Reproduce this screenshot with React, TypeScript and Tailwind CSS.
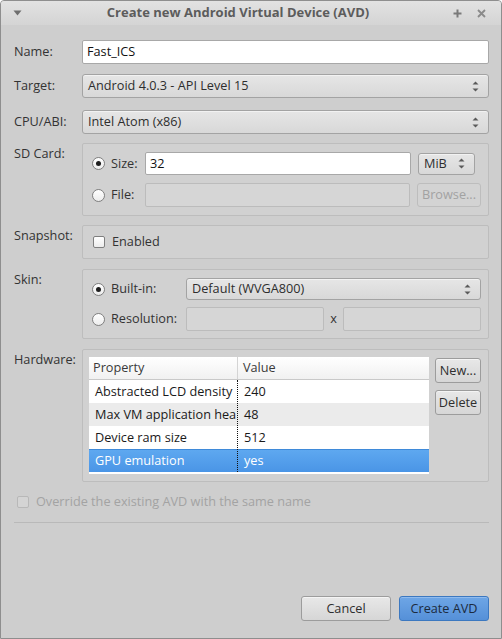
import React from "react";

const font = { fontFamily: "'Open Sans', 'DejaVu Sans', sans-serif" };

function Arrows() {
  return (
    <svg width="7" height="11" viewBox="0 0 7 11" className="shrink-0">
      <path d="M3.5 0.5 L6.5 3.5 L0.5 3.5 Z" fill="#5a5a5a" />
      <path d="M3.5 10.5 L6.5 7.5 L0.5 7.5 Z" fill="#5a5a5a" />
    </svg>
  );
}

function Combo({ text, className = "" }: { text: string; className?: string }) {
  return (
    <div
      className={
        "flex items-center justify-between pl-[5px] pr-[9px] rounded-[3px] border border-[#a3a3a3] bg-gradient-to-b from-[#e6e6e6] to-[#d8d8d8] text-[#2e2e2e] shadow-[inset_0_1px_0_#f2f2f2] " +
        className
      }
    >
      <span>{text}</span>
      <Arrows />
    </div>
  );
}

function Radio({ checked }: { checked?: boolean }) {
  return (
    <div className="w-[13px] h-[13px] rounded-full border border-[#7f7f7f] bg-gradient-to-b from-[#ffffff] to-[#ececec] flex items-center justify-center shrink-0">
      {checked && <div className="w-[5px] h-[5px] rounded-full bg-[#1e1e1e]" />}
    </div>
  );
}

function Group({ className = "", children }: { className?: string; children: React.ReactNode }) {
  return (
    <div className={"flex-1 border border-[#bdbdbd] rounded-[2px] bg-[#d1d1d1] " + className}>
      {children}
    </div>
  );
}

function Btn({ text, className = "" }: { text: string; className?: string }) {
  return (
    <div
      className={
        "flex items-center justify-center rounded-[3px] border border-[#9c9c9c] bg-gradient-to-b from-[#e8e8e8] to-[#d6d6d6] text-[#2e2e2e] shadow-[inset_0_1px_0_#f4f4f4] " +
        className
      }
    >
      {text}
    </div>
  );
}

export default function App() {
  const rows = [
    { p: "Abstracted LCD density", v: "240", bg: "bg-white" },
    { p: "Max VM application hea", v: "48", bg: "bg-[#ebebeb]" },
    { p: "Device ram size", v: "512", bg: "bg-white" },
  ];
  return (
    <div
      style={font}
      className="w-[502px] h-[639px] bg-[#cecece] border border-[#8e8e8e] rounded-t-[4px] flex flex-col overflow-hidden text-[12.7px] text-[#333333]"
    >
      {/* Title bar */}
      <div className="h-[24px] shrink-0 flex items-center bg-gradient-to-b from-[#e2e2e2] to-[#d4d4d4] relative">
        <div className="w-[38px] pl-[12px] flex items-center">
          <svg width="9" height="6" viewBox="0 0 9 6">
            <path d="M0.5 0.5 L8.5 0.5 L4.5 5.5 Z" fill="#6e6e6e" />
          </svg>
        </div>
        <div className="flex-1 text-center font-bold text-[13px] text-[#5c5c5c] pr-[12px]">
          Create new Android Virtual Device (AVD)
        </div>
        <div className="w-[52px] flex items-center gap-[15px] pl-[4px]">
          <svg width="9" height="9" viewBox="0 0 9 9">
            <path d="M4.5 0.5 V8.5 M0.5 4.5 H8.5" stroke="#7a7a7a" strokeWidth="2" />
          </svg>
          <svg width="9" height="9" viewBox="0 0 9 9">
            <path d="M1 1 L8 8 M8 1 L1 8" stroke="#8a8a8a" strokeWidth="1.8" />
          </svg>
        </div>
      </div>

      <div className="flex flex-col pl-[13px] pr-[12px]">
        {/* Name */}
        <div className="flex items-center mt-[15px]">
          <div className="w-[68px]">Name:</div>
          <div className="flex-1 h-[24px] flex items-center pl-[4px] bg-white border border-[#a8a8a8] rounded-[2px] text-[#111]">
            Fast_ICS
          </div>
        </div>
        {/* Target */}
        <div className="flex items-center mt-[10px]">
          <div className="w-[68px]">Target:</div>
          <Combo text="Android 4.0.3 - API Level 15" className="flex-1 h-[24px]" />
        </div>
        {/* CPU */}
        <div className="flex items-center mt-[12px]">
          <div className="w-[68px]">CPU/ABI:</div>
          <Combo text="Intel Atom (x86)" className="flex-1 h-[24px]" />
        </div>
        {/* SD Card */}
        <div className="flex mt-[9px]">
          <div className="w-[68px] pt-[1px]">SD Card:</div>
          <Group className="h-[73px] pt-[8px] pl-[9px] pr-[7px]">
            <div className="flex items-center h-[23px]">
              <Radio checked />
              <div className="w-[40px] pl-[6px]">Size:</div>
              <div className="flex-1 h-[23px] flex items-center pl-[4px] bg-white border border-[#a8a8a8] rounded-[2px] text-[#111]">
                32
              </div>
              <Combo text="MiB" className="w-[57px] h-[22px] ml-[7px] mr-[6px] pl-[5px] pr-[6px]" />
            </div>
            <div className="flex items-center h-[24px] mt-[8px]">
              <Radio />
              <div className="w-[40px] pl-[6px]">File:</div>
              <div className="flex-1 h-[24px] bg-[#d6d6d6] border border-[#bcbcbc] rounded-[2px]" />
              <div className="w-[64px] h-[24px] ml-[7px] flex items-center justify-center rounded-[3px] border border-[#bdbdbd] bg-[#d3d3d3] text-[#a2a2a2]">
                Browse...
              </div>
            </div>
          </Group>
        </div>
        {/* Snapshot */}
        <div className="flex mt-[9px]">
          <div className="w-[68px] pt-[1px]">Snapshot:</div>
          <Group className="h-[34px] flex items-center pl-[10px]">
            <div className="w-[12px] h-[12px] bg-white border border-[#7f7f7f] rounded-[2px] bg-gradient-to-b from-[#ffffff] to-[#ececec]" />
            <div className="pl-[7px]">Enabled</div>
          </Group>
        </div>
        {/* Skin */}
        <div className="flex mt-[10px]">
          <div className="w-[68px] pt-[1px]">Skin:</div>
          <Group className="h-[70px] pt-[8px] pl-[9px] pr-[7px]">
            <div className="flex items-center h-[22px]">
              <Radio checked />
              <div className="w-[81px] pl-[6px]">Built-in:</div>
              <Combo text="Default (WVGA800)" className="flex-1 h-[22px] pr-[7px]" />
            </div>
            <div className="flex items-center h-[24px] mt-[7px]">
              <Radio />
              <div className="w-[81px] pl-[6px]">Resolution:</div>
              <div className="w-[138px] h-[24px] bg-[#d6d6d6] border border-[#bcbcbc] rounded-[2px]" />
              <div className="w-[19px] text-center">x</div>
              <div className="flex-1 h-[24px] bg-[#d6d6d6] border border-[#bcbcbc] rounded-[2px]" />
            </div>
          </Group>
        </div>
        {/* Hardware */}
        <div className="flex mt-[10px]">
          <div className="w-[68px] pt-[1px]">Hardware:</div>
          <Group className="h-[133px] pt-[7px] pl-[6px] pr-[7px] flex gap-[6px]">
            <div className="w-[340px] h-[117px] bg-white flex flex-col text-[#1a1a1a] relative">
              <div className="h-[23px] flex items-center bg-gradient-to-b from-[#ffffff] to-[#f1f1f1] border-b border-[#c9c9c9] text-[#3a3a3a]">
                <div className="w-[149px] pl-[4px] border-r border-[#d4d4d4] h-full flex items-center">Property</div>
                <div className="pl-[5px]">Value</div>
              </div>
              {rows.map((r) => (
                <div key={r.p} className={"h-[23px] flex items-center " + r.bg}>
                  <div className="w-[149px] pl-[6px] whitespace-nowrap overflow-hidden">{r.p}</div>
                  <div className="pl-[6px]">{r.v}</div>
                </div>
              ))}
              <div className="h-[23px] flex items-center bg-gradient-to-b from-[#5ea8f0] to-[#4a95e6] border-t border-[#3f8ad9] text-white">
                <div className="w-[149px] pl-[6px]">GPU emulation</div>
                <div className="pl-[6px]">yes</div>
              </div>
              <div className="absolute left-[148px] top-[23px] h-[92px] border-l border-dotted border-[#111]" />
            </div>
            <div className="flex flex-col gap-[7px] pt-[1px]">
              <Btn text="New..." className="w-[46px] h-[25px]" />
              <Btn text="Delete" className="w-[46px] h-[25px]" />
            </div>
          </Group>
        </div>
        {/* Override */}
        <div className="flex items-center mt-[10px] pl-[3px] text-[#a3a3a3]">
          <div className="w-[12px] h-[12px] border border-[#b8b8b8] rounded-[2px] bg-[#d4d4d4]" />
          <div className="pl-[7px]">Override the existing AVD with the same name</div>
        </div>
        <div className="mt-[11px] h-px bg-[#b9b9b9]" />
        {/* Buttons */}
        <div className="flex justify-end gap-[8px] mt-[73px]">
          <Btn text="Cancel" className="w-[90px] h-[25px]" />
          <div className="w-[90px] h-[25px] flex items-center justify-center rounded-[3px] border border-[#3c78c0] bg-gradient-to-b from-[#6ea6e6] to-[#5590d8] text-[#1c2b3d] shadow-[inset_0_1px_0_#8fbbee]">
            Create AVD
          </div>
        </div>
      </div>
    </div>
  );
}
